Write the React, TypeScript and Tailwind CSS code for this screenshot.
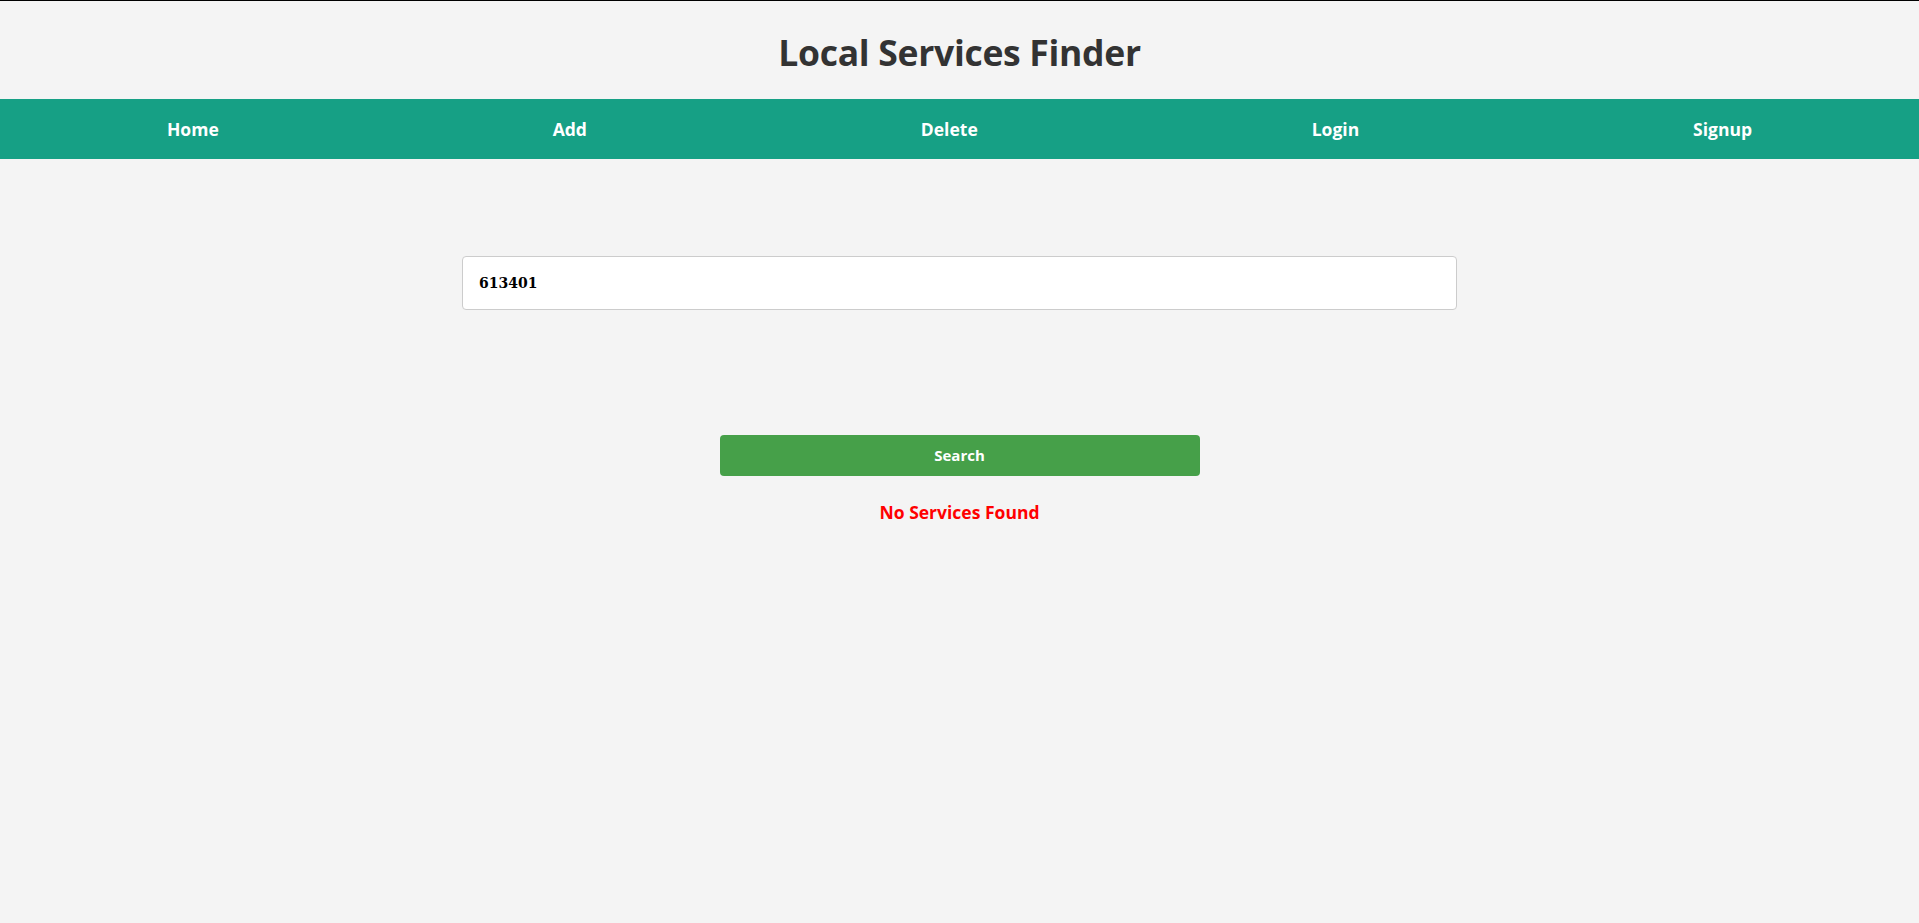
export default function App() {
  const links = ["Home", "Add", "Delete", "Login", "Signup"];
  return (
    <div
      className="min-h-[923px] bg-[#f4f4f4] border-t border-black"
      style={{ fontFamily: '"Open Sans", "Noto Sans", sans-serif' }}
    >
      {/* Header */}
      <header className="h-[98px] flex items-center justify-center pt-[5px]">
        <h1 className="text-[35.5px] font-bold text-[#333] tracking-[-0.3px]">Local Services Finder</h1>
      </header>

      {/* Nav */}
      <nav className="h-[60px] bg-[#16a085] flex items-center justify-around">
        {links.map((l) => (
          <a key={l} href="#" className="text-white font-bold text-[17.5px]">
            {l}
          </a>
        ))}
      </nav>

      {/* Search */}
      <main className="flex flex-col items-center pt-[97px]">
        <input
          type="text"
          defaultValue="613401"
          className="w-[995px] h-[54px] bg-white border border-[#ccc] rounded-[4px] px-[16px] text-[14px] font-bold text-black outline-none"
          style={{ fontFamily: '"DejaVu Serif", serif' }}
        />
        <button className="mt-[125px] w-[480px] h-[41px] bg-[#46a049] rounded-[4px] text-white font-bold text-[15px]">
          Search
        </button>
        <p className="mt-[23px] text-[#ff0000] font-bold text-[17.5px]">No Services Found</p>
      </main>
    </div>
  );
}
